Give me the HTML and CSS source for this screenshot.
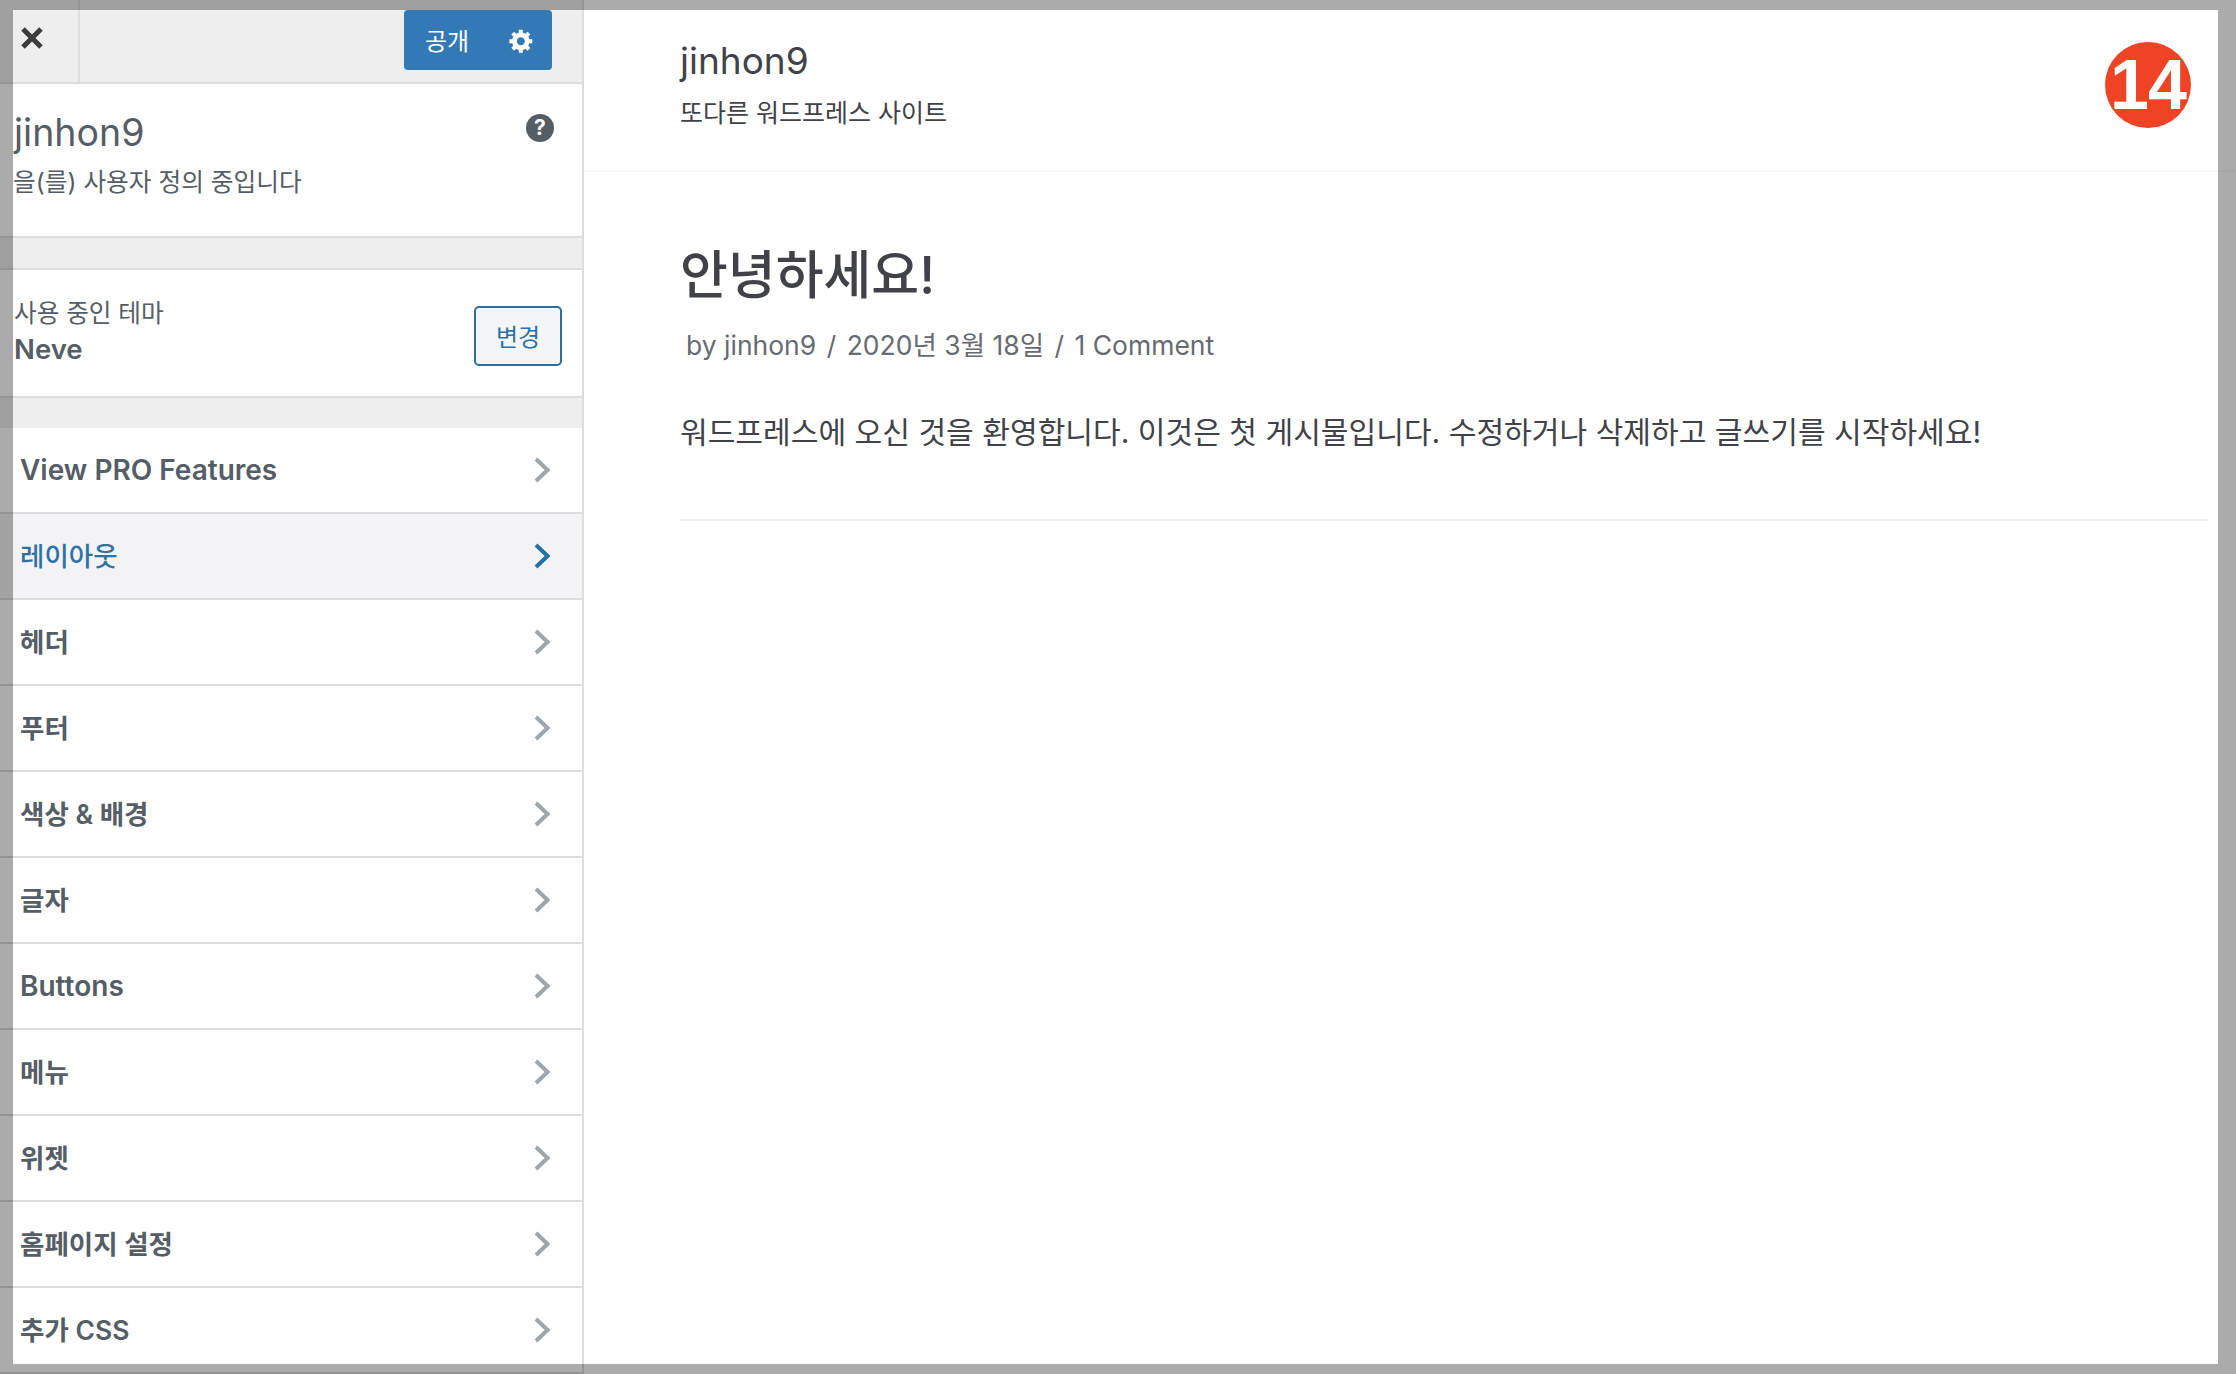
FILE: index.html
```html
<!DOCTYPE html>
<html lang="ko">
<head>
    <meta charset="UTF-8">
    <meta name="viewport" content="width=device-width, initial-scale=1.0">
    <title>jinhon9 - Customizer</title>
    <link rel="stylesheet" href="styles.css">
</head>
<body>

    <svg class="sprite" aria-hidden="true">
        <symbol id="chevron" viewBox="0 0 16 26">
            <path d="M2 2 L13.5 13 L2 24" fill="none" stroke="currentColor" stroke-width="4"/>
        </symbol>
    </svg>

    <!-- Customizer sidebar -->
    <aside class="sidebar">
        <div class="topbar">
            <a class="close-button" href="#">
                <svg viewBox="0 0 24 24" width="24" height="24">
                    <path d="M3 3 L21 21 M21 3 L3 21" fill="none" stroke="#3c3c3c" stroke-width="5"/>
                </svg>
            </a>
            <div class="publish">
                <span class="publish-label">공개</span>
                <svg class="publish-gear" viewBox="0 0 20 20" width="27" height="27">
                    <path fill="#fff" d="M18 12h-2.18c-.17.7-.44 1.35-.81 1.93l1.54 1.54-2.1 2.1-1.54-1.54c-.58.36-1.23.63-1.91.79V19H8v-2.18c-.68-.16-1.33-.43-1.91-.79l-1.54 1.54-2.12-2.12 1.54-1.54c-.36-.58-.63-1.23-.79-1.91H1V9.03h2.17c.16-.7.44-1.35.8-1.94L2.43 5.55l2.1-2.1 1.54 1.54c.58-.37 1.24-.64 1.93-.81V2h3v2.18c.68.16 1.33.43 1.91.79l1.54-1.54 2.12 2.12-1.54 1.54c.36.59.64 1.24.8 1.94H18V12zm-8.5 1.5c1.66 0 3-1.34 3-3s-1.34-3-3-3-3 1.34-3 3 1.34 3 3 3z"/>
                </svg>
            </div>
        </div>

        <section class="site-info">
            <div>
                <h2>jinhon9</h2>
                <p>을(를) 사용자 정의 중입니다</p>
            </div>
            <span class="help">?</span>
        </section>

        <div class="band"></div>

        <section class="theme">
            <div>
                <p>사용 중인 테마</p>
                <strong>Neve</strong>
            </div>
            <button class="change-button">변경</button>
        </section>

        <div class="band band-open"></div>

        <!-- Panels -->
        <ul class="panels">
            <li class="latin">View PRO Features<svg class="chevron"><use href="#chevron"/></svg></li>
            <li class="active">레이아웃<svg class="chevron"><use href="#chevron"/></svg></li>
            <li>헤더<svg class="chevron"><use href="#chevron"/></svg></li>
            <li>푸터<svg class="chevron"><use href="#chevron"/></svg></li>
            <li>색상 &amp; 배경<svg class="chevron"><use href="#chevron"/></svg></li>
            <li>글자<svg class="chevron"><use href="#chevron"/></svg></li>
            <li class="latin">Buttons<svg class="chevron"><use href="#chevron"/></svg></li>
            <li>메뉴<svg class="chevron"><use href="#chevron"/></svg></li>
            <li>위젯<svg class="chevron"><use href="#chevron"/></svg></li>
            <li>홈페이지 설정<svg class="chevron"><use href="#chevron"/></svg></li>
            <li>추가 CSS<svg class="chevron"><use href="#chevron"/></svg></li>
        </ul>
    </aside>

    <!-- Site preview -->
    <main class="preview">
        <header class="site-header">
            <div class="site-title">jinhon9</div>
            <div class="site-tagline">또다른 워드프레스 사이트</div>
        </header>
        <article class="post">
            <h1>안녕하세요!</h1>
            <div class="post-meta">by jinhon9 <span>/</span> 2020년 3월 18일 <span>/</span> 1 Comment</div>
            <p>워드프레스에 오신 것을 환영합니다. 이것은 첫 게시물입니다. 수정하거나 삭제하고 글쓰기를 시작하세요!</p>
        </article>
    </main>

    <div class="step-badge">14</div>
    <div class="frame"></div>

</body>
</html>
```

FILE: styles.css
```css
/* General Styles */
html, body {
    height: 100%;
    margin: 0;
}

body {
    display: flex;
    overflow: hidden;
    font-family: 'Inter', 'Noto Sans CJK KR', sans-serif;
    background-color: #fff;
    color: #555d66;
}

h1, h2, p {
    margin: 0;
    font-weight: normal;
}

.sprite {
    display: none;
}

/* Sidebar */
.sidebar {
    width: 582px;
    flex-shrink: 0;
    border-right: 2px solid #ddd;
    background-color: #eee;
}

.topbar {
    display: flex;
    justify-content: space-between;
    height: 82px;
    border-bottom: 2px solid #ddd;
}

.close-button {
    display: flex;
    align-items: center;
    justify-content: flex-end;
    width: 80px;
    padding: 0 34px 6px 0;
    box-sizing: border-box;
    border-right: 2px solid #ddd;
}

.publish {
    display: flex;
    align-items: center;
    justify-content: space-between;
    width: 148px;
    height: 60px;
    margin: 10px 30px 0 0;
    padding: 0 17px 0 21px;
    box-sizing: border-box;
    border-radius: 4px;
    background-color: #3379b5;
    color: #fff;
    font-size: 24px;
}

.publish-label {
    position: relative;
    top: -1px;
}

.site-info {
    display: flex;
    justify-content: space-between;
    height: 154px;
    padding: 26px 28px 0 14px;
    box-sizing: border-box;
    border-bottom: 2px solid #ddd;
    background-color: #fff;
}

.site-info h2 {
    font-size: 37.5px;
    line-height: 46px;
}

.site-info p {
    margin: 10px 0 0 -1px;
    font-size: 24.7px;
    line-height: 32px;
}

.help {
    width: 28px;
    height: 28px;
    margin-top: 4px;
    border-radius: 50%;
    background-color: #555d66;
    color: #fff;
    font-size: 21px;
    font-weight: bold;
    line-height: 28px;
    text-align: center;
}

.band {
    height: 30px;
    border-bottom: 2px solid #ddd;
}

.band-open {
    border-bottom: none;
}

.theme {
    display: flex;
    justify-content: space-between;
    align-items: center;
    height: 128px;
    padding: 0 20px 0 14px;
    box-sizing: border-box;
    border-bottom: 2px solid #ddd;
    background-color: #fff;
}

.theme p {
    font-size: 24.6px;
    line-height: 36px;
}

.theme strong {
    display: block;
    font-size: 27.5px;
    font-weight: 600;
    line-height: 36px;
}

.theme div {
    padding-bottom: 5px;
}

.change-button {
    width: 88px;
    height: 60px;
    margin-top: 6px;
    padding-bottom: 3px;
    border: 2px solid #2e6f9f;
    border-radius: 5px;
    background-color: #f3f5f6;
    color: #2d70a5;
    font-family: inherit;
    font-size: 24px;
}

/* Panel list */
.panels {
    margin: 0;
    padding: 0;
    list-style: none;
}

.panels li {
    display: flex;
    justify-content: space-between;
    align-items: center;
    height: 84px;
    padding: 0 32px 0 20px;
    border-bottom: 2px solid #ddd;
    background-color: #fff;
    font-size: 26.5px;
    font-weight: 600;
    line-height: 80px;
}

.panels li.latin {
    font-size: 28px;
    line-height: 84px;
}

.panels li.active {
    background-color: #f3f3f5;
    color: #2d72a7;
    font-weight: 500;
}

.chevron {
    width: 16px;
    height: 26px;
    color: #a0a5aa;
}

.active .chevron {
    color: #2271a8;
}

/* Preview */
.preview {
    flex: 1;
    color: #404248;
}

.site-header {
    height: 172px;
    padding: 38px 0 0 96px;
    box-sizing: border-box;
    border-bottom: 2px solid #f8f8f8;
}

.site-title {
    font-size: 37px;
    line-height: 46px;
}

.site-tagline {
    margin-top: 12px;
    font-size: 25px;
    line-height: 34px;
}

.post {
    margin: 0 28px 0 96px;
    padding: 69px 0 67px;
    border-bottom: 2px solid #eee;
}

.post h1 {
    font-size: 52px;
    font-weight: 500;
    line-height: 70px;
}

.post-meta {
    margin-top: 16px;
    padding-left: 6px;
    color: #676a70;
    font-size: 26.5px;
    line-height: 36px;
}

.post-meta span {
    margin: 0 3px;
}

.post p {
    margin-top: 49px;
    font-size: 30.1px;
    line-height: 40px;
}

/* Things on top of the page */
.step-badge {
    position: absolute;
    top: 42px;
    left: 2105px;
    width: 86px;
    height: 86px;
    border-radius: 50%;
    background-color: #ee4425;
    color: #fff;
    font-family: 'Liberation Sans', sans-serif;
    font-size: 70px;
    font-weight: bold;
    letter-spacing: -1px;
    line-height: 86px;
    text-align: center;
}

.frame {
    position: fixed;
    top: 0;
    left: 0;
    right: 0;
    bottom: 0;
    border-style: solid;
    border-color: rgba(0, 0, 0, 0.33);
    border-width: 10px 18px 10px 13px;
    pointer-events: none;
}
```
